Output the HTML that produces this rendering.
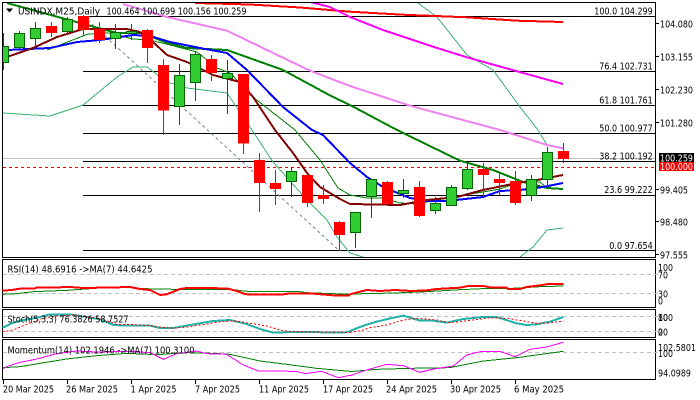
<!DOCTYPE html>
<html>
<head>
<meta charset="utf-8">
<style>
html,body{margin:0;padding:0;background:#fff;width:700px;height:400px;overflow:hidden}
svg{display:block}
text{font-family:"DejaVu Sans","Liberation Sans",sans-serif;font-size:10px;fill:#000}
.r line{stroke:#b22222;stroke-width:1}
.r rect{fill:#f00;stroke:none}
.g line{stroke:#006400;stroke-width:1}
.g rect{fill:#32cd32;stroke:#006400;stroke-width:1}
polyline{fill:none;stroke-linejoin:round;vector-effect:non-scaling-stroke;shape-rendering:crispEdges}
.h line{stroke:#000;stroke-width:1}
.t line{stroke:#000;stroke-width:1}
</style>
</head>
<body>
<svg width="700" height="400" viewBox="0 0 700 400" xmlns="http://www.w3.org/2000/svg">
<defs>
<clipPath id="m"><rect x="3" y="3" width="652" height="254"/></clipPath>
</defs>
<rect width="700" height="400" fill="#fff"/>

<g clip-path="url(#m)">
<line x1="3" y1="158.5" x2="655" y2="158.5" stroke="#c0c0c0"/>
<g class="h">
<line x1="83" y1="16.5" x2="655" y2="16.5"/>
<line x1="83" y1="71.5" x2="655" y2="71.5"/>
<line x1="83" y1="105.5" x2="655" y2="105.5"/>
<line x1="83" y1="133.5" x2="655" y2="133.5"/>
<line x1="83" y1="161.5" x2="655" y2="161.5"/>
<line x1="83" y1="195.5" x2="655" y2="195.5"/>
<line x1="83" y1="250.5" x2="655" y2="250.5"/>
</g>
<line x1="3" y1="167.5" x2="655" y2="167.5" stroke="#f00" stroke-dasharray="3 3"/>
<line x1="83" y1="16" x2="339" y2="250.5" stroke="#708090" stroke-dasharray="3 3"/>

<!-- Bollinger lower -->
<polyline stroke="#3cb371" stroke-width="1" points="3,113 50,116 83,105 117,77 133,67 147,67 167,82 187,88 227,93 252,130 273,162 307,200 327,220 337,237 350,253 363,257 372,262"/>
<polyline stroke="#3cb371" stroke-width="1" points="515,262 520,257 533,247 547,230 563,228"/>
<!-- Bollinger upper -->
<polyline stroke="#3cb371" stroke-width="1" points="412,-2 418,3 437,17 467,55 493,70 520,107 538,130 547,145 563,148"/>
<!-- red -->
<polyline stroke="#f00" stroke-width="2" points="195,3 250,4.5 300,7.5 350,11.7 403,14.7 467,17.3 517,20.7 563,22"/>
<!-- magenta -->
<polyline stroke="#f0f" stroke-width="2" points="310,2 330,7 350,17 383,30 433,46.7 467,57.3 517,71.3 563,84"/>
<!-- violet -->
<polyline stroke="#ee82ee" stroke-width="2" points="123,4 167,17 227,30.7 267,50 310,70.7 350,86 411,106 500,130 547,145 563,148.3"/>
<!-- thick green -->
<polyline stroke="#008000" stroke-width="2" points="7,3 80,23 117,33 143,33 167,43 187,48 227,50 283,70 333,97 350,105 397,130 460,160.7 493,170 523,182 547,188 563,189"/>
<!-- thin green -->
<polyline stroke="#008000" stroke-width="1" points="47,50 60,45 88,34 110,33 133,39 150,40 170,45 197,52 217,68 230,73 253,97 295,130 320,160 338,188 350,195 367,198 383,198 400,203 417,204 447,198 483,192 500,189 517,183 540,182 547,188 563,189"/>
<!-- blue -->
<polyline stroke="#00f" stroke-width="2" points="7,50 50,48 77,42 100,40 133,35 150,36 170,42 200,48 227,53 247,70 283,107 312,130 323,135 350,163 367,177 383,187 410,198 427,201 447,201 483,197 500,191 520,190 543,187 563,183"/>
<!-- dark red -->
<polyline stroke="#800000" stroke-width="2" points="7,57 33,48 57,37 83,29 127,29 140,32 153,42 167,55 187,62 213,75 240,82 253,97 275,130 293,153 307,173 320,187 340,199 350,204 400,205 427,200 457,197 483,190 517,183 537,180 563,175"/>

<!-- candles -->
<g class="g"><line x1="3.5" y1="33" x2="3.5" y2="70"/><rect x="-1.5" y="46.5" width="10" height="16"/></g>
<g class="g"><line x1="19.5" y1="31" x2="19.5" y2="49"/><rect x="14.5" y="33.5" width="10" height="14"/></g>
<g class="g"><line x1="35.5" y1="22" x2="35.5" y2="47"/><rect x="30.5" y="28.5" width="10" height="10"/></g>
<g class="r"><line x1="51.5" y1="22" x2="51.5" y2="37"/><rect x="46" y="26" width="11" height="7"/></g>
<g class="g"><line x1="67.5" y1="17" x2="67.5" y2="35"/><rect x="62.5" y="19.5" width="10" height="12"/></g>
<g class="r"><line x1="83.5" y1="15" x2="83.5" y2="36"/><rect x="78" y="16" width="11" height="14"/></g>
<g class="r"><line x1="99.5" y1="22" x2="99.5" y2="43"/><rect x="94" y="29" width="11" height="11"/></g>
<g class="g"><line x1="115.5" y1="24" x2="115.5" y2="49"/><rect x="110.5" y="32.5" width="10" height="6"/></g>
<g class="g"><line x1="131.5" y1="24" x2="131.5" y2="40"/><rect x="126.5" y="31.5" width="10" height="2"/></g>
<g class="r"><line x1="147.5" y1="29" x2="147.5" y2="63"/><rect x="142" y="30" width="11" height="18"/></g>
<g class="r"><line x1="163.5" y1="59" x2="163.5" y2="135"/><rect x="158" y="65" width="11" height="45.5"/></g>
<g class="g"><line x1="179.5" y1="64" x2="179.5" y2="125"/><rect x="174.5" y="75.5" width="10" height="31"/></g>
<g class="g"><line x1="195.5" y1="51" x2="195.5" y2="101"/><rect x="190.5" y="54.5" width="10" height="28"/></g>
<g class="r"><line x1="211.5" y1="55" x2="211.5" y2="81"/><rect x="206" y="59" width="11" height="14"/></g>
<g class="g"><line x1="227.5" y1="60" x2="227.5" y2="114"/><rect x="222.5" y="73.5" width="10" height="5"/></g>
<g class="r"><line x1="243.5" y1="74" x2="243.5" y2="154"/><rect x="238" y="74" width="11" height="69.5"/></g>
<g class="r"><line x1="259.5" y1="153" x2="259.5" y2="212"/><rect x="254" y="160" width="11" height="23"/></g>
<g class="r"><line x1="275.5" y1="170" x2="275.5" y2="205"/><rect x="270" y="183" width="11" height="6"/></g>
<g class="g"><line x1="291.5" y1="167" x2="291.5" y2="197"/><rect x="286.5" y="171.5" width="10" height="10"/></g>
<g class="r"><line x1="307.5" y1="174" x2="307.5" y2="207"/><rect x="302" y="175" width="11" height="28"/></g>
<g class="r"><line x1="323.5" y1="185" x2="323.5" y2="204"/><rect x="318" y="195" width="11" height="4"/></g>
<g class="r"><line x1="339.5" y1="221" x2="339.5" y2="251"/><rect x="334" y="222" width="11" height="13"/></g>
<g class="g"><line x1="355.5" y1="212" x2="355.5" y2="248"/><rect x="350.5" y="212.5" width="10" height="20"/></g>
<g class="g"><line x1="371.5" y1="179" x2="371.5" y2="218"/><rect x="366.5" y="179.5" width="10" height="17"/></g>
<g class="r"><line x1="387.5" y1="181" x2="387.5" y2="204"/><rect x="382" y="182" width="11" height="22"/></g>
<g class="g"><line x1="403.5" y1="179" x2="403.5" y2="198"/><rect x="398.5" y="190.5" width="10" height="3"/></g>
<g class="r"><line x1="419.5" y1="181" x2="419.5" y2="217"/><rect x="414" y="187" width="11" height="29"/></g>
<g class="g"><line x1="435.5" y1="197" x2="435.5" y2="214"/><rect x="430.5" y="203.5" width="10" height="7"/></g>
<g class="g"><line x1="451.5" y1="185" x2="451.5" y2="206"/><rect x="446.5" y="187.5" width="10" height="18"/></g>
<g class="g"><line x1="467.5" y1="162" x2="467.5" y2="190"/><rect x="462.5" y="169.5" width="10" height="19"/></g>
<g class="r"><line x1="483.5" y1="163" x2="483.5" y2="197"/><rect x="478" y="169" width="11" height="6"/></g>
<g class="r"><line x1="499.5" y1="172" x2="499.5" y2="195"/><rect x="494" y="179" width="11" height="4"/></g>
<g class="r"><line x1="515.5" y1="171" x2="515.5" y2="205"/><rect x="510" y="181" width="11" height="22"/></g>
<g class="g"><line x1="531.5" y1="175" x2="531.5" y2="201"/><rect x="526.5" y="179.5" width="10" height="16"/></g>
<g class="g"><line x1="547.5" y1="147" x2="547.5" y2="189"/><rect x="542.5" y="152.5" width="10" height="27"/></g>
<g class="r"><line x1="563.5" y1="143" x2="563.5" y2="163"/><rect x="558" y="151" width="11" height="8"/></g>
</g>

<!-- frames -->
<g fill="none" stroke="#000" stroke-width="1">
<rect x="2.5" y="2.5" width="653" height="255"/>
<rect x="2.5" y="259.5" width="653" height="48"/>
<rect x="2.5" y="309.5" width="653" height="28"/>
<rect x="2.5" y="339.5" width="653" height="40"/>
</g>

<!-- axis ticks -->
<g class="t">
<line x1="655" y1="23.5" x2="659" y2="23.5"/>
<line x1="655" y1="56.5" x2="659" y2="56.5"/>
<line x1="655" y1="89.5" x2="659" y2="89.5"/>
<line x1="655" y1="122.5" x2="659" y2="122.5"/>
<line x1="655" y1="189.5" x2="659" y2="189.5"/>
<line x1="655" y1="221.5" x2="659" y2="221.5"/>
<line x1="655" y1="254.5" x2="659" y2="254.5"/>
<line x1="3.5" y1="380" x2="3.5" y2="384"/>
<line x1="67.5" y1="380" x2="67.5" y2="384"/>
<line x1="131.5" y1="380" x2="131.5" y2="384"/>
<line x1="195.5" y1="380" x2="195.5" y2="384"/>
<line x1="259.5" y1="380" x2="259.5" y2="384"/>
<line x1="323.5" y1="380" x2="323.5" y2="384"/>
<line x1="387.5" y1="380" x2="387.5" y2="384"/>
<line x1="451.5" y1="380" x2="451.5" y2="384"/>
<line x1="515.5" y1="380" x2="515.5" y2="384"/>
</g>

<!-- dashed level lines -->
<g stroke="#c0c0c0" stroke-dasharray="4 3">
<line x1="3" y1="274.5" x2="660" y2="274.5"/>
<line x1="3" y1="293.5" x2="660" y2="293.5"/>
<line x1="3" y1="316.5" x2="660" y2="316.5"/>
<line x1="3" y1="331.5" x2="660" y2="331.5"/>
<line x1="3" y1="352.5" x2="660" y2="352.5"/>
</g>
<g transform="translate(0,255) scale(.33333)">
<polyline stroke="#008000" stroke-width="1" points="8,118 50,116 100,110 200,106 300,99 370,96 400,99 460,102 530,103 690,103 750,110 900,110 920,113 1050,118"/>
<polyline stroke="#f00" stroke-width="2" points="8,107 35,105 60,101 105,100 110,98 175,97 210,96 250,99 350,97 390,96 420,102 450,105 480,120 500,118 540,102 560,99 680,100 710,108 735,117 750,119 850,118 870,115 940,116 1000,121 1050,121"/>
<polyline stroke="#20b2aa" stroke-width="2" points="8,218 35,205 60,197 100,190 120,186 150,178 210,178 260,186 300,193 340,210 380,212 450,212 480,219 520,219 570,210 640,198 690,195 740,207 780,222 820,233 880,231 950,231 980,233 1030,233 1050,229"/>
<polyline stroke="#f00" stroke-width="1" stroke-dasharray="2 2" points="8,230 40,225 70,212 100,200 130,190 170,183 220,180 280,188 320,197 350,208 400,209 450,212 490,217 520,220 560,216 610,209 650,202 700,197 750,205 800,213 850,228 900,230 1050,232"/>
<polyline stroke="#008000" stroke-width="1" points="8,338 60,335 120,325 200,312 280,303 380,295 470,299 560,293 640,295 690,298 780,318 860,328 950,340 1050,349"/>
<polyline stroke="#f0f" stroke-width="1" points="8,342 20,335 60,322 110,312 170,296 230,288 290,291 340,290 400,290 450,293 490,313 530,296 590,288 620,296 680,298 730,330 775,348 890,349 915,356 965,349 1015,368 1050,361"/>
</g>
<g transform="translate(350,255) scale(.33333)">
<polyline stroke="#008000" stroke-width="1" points="0,118 40,116 135,114 230,110 330,104 420,100 470,101 520,98 570,95 640,93"/>
<polyline stroke="#f00" stroke-width="2" points="0,118 30,110 50,105 90,108 135,105 185,108 230,106 260,102 330,98 355,93 400,93 420,97 470,98 475,102 510,102 530,96 570,91 595,87 640,87"/>
<polyline stroke="#20b2aa" stroke-width="2" points="0,228 40,212 80,200 130,188 160,182 210,197 250,197 290,203 340,192 400,186 440,186 500,205 530,210 560,208 600,200 640,186"/>
<polyline stroke="#f00" stroke-width="1" stroke-dasharray="2 2" points="0,232 30,228 60,218 110,210 160,195 200,190 260,195 300,203 360,196 420,188 470,190 520,198 560,205 600,204 640,198"/>
<polyline stroke="#008000" stroke-width="1" points="0,350 80,343 180,340 300,338 400,318 500,308 640,289"/>
<polyline stroke="#f0f" stroke-width="1" points="0,362 50,345 110,328 160,332 210,352 250,342 310,333 350,300 395,289 450,289 495,305 540,283 590,276 640,262"/>
</g>

<!-- header -->
<polygon points="6,8.5 13,8.5 9.5,12.5" fill="#000"/>
<text x="18" y="14.5" textLength="82" lengthAdjust="spacingAndGlyphs">USINDX,M25,Daily</text>
<text x="106.5" y="14.5" textLength="140" lengthAdjust="spacingAndGlyphs">100.464 100.699 100.156 100.259</text>

<!-- fib labels -->
<text x="594.3" y="14.5" textLength="58.4" lengthAdjust="spacingAndGlyphs">100.0 104.299</text>
<text x="599.3" y="69.5" textLength="53.4" lengthAdjust="spacingAndGlyphs">76.4 102.731</text>
<text x="599.3" y="103.5" textLength="53.4" lengthAdjust="spacingAndGlyphs">61.8 101.761</text>
<text x="599.3" y="131.5" textLength="53.4" lengthAdjust="spacingAndGlyphs">50.0 100.977</text>
<text x="599.3" y="159.5" textLength="53.4" lengthAdjust="spacingAndGlyphs">38.2 100.192</text>
<text x="604.3" y="193" textLength="48.4" lengthAdjust="spacingAndGlyphs">23.6 99.222</text>
<text x="609.3" y="249" textLength="43.4" lengthAdjust="spacingAndGlyphs">0.0 97.654</text>

<!-- price axis -->
<text x="660" y="27.5" textLength="33" lengthAdjust="spacingAndGlyphs">104.080</text>
<text x="660" y="60.5" textLength="33" lengthAdjust="spacingAndGlyphs">103.155</text>
<text x="660" y="93.5" textLength="33" lengthAdjust="spacingAndGlyphs">102.230</text>
<text x="660" y="126.5" textLength="33" lengthAdjust="spacingAndGlyphs">101.280</text>
<text x="660" y="193.5" textLength="28" lengthAdjust="spacingAndGlyphs">99.405</text>
<text x="660" y="225.5" textLength="28" lengthAdjust="spacingAndGlyphs">98.480</text>
<text x="660" y="258.5" textLength="28" lengthAdjust="spacingAndGlyphs">97.555</text>
<rect x="659" y="153" width="35" height="9" fill="#000"/>
<text x="660" y="161.5" textLength="33" lengthAdjust="spacingAndGlyphs" style="fill:#fff">100.259</text>
<rect x="659" y="162" width="35" height="9" fill="#f00"/>
<text x="660" y="170" textLength="33" lengthAdjust="spacingAndGlyphs" style="fill:#fff">100.000</text>

<!-- subwindow labels -->
<text x="7.5" y="272.5" textLength="145" lengthAdjust="spacingAndGlyphs">RSI(14) 48.6916  -&gt;MA(7) 44.6425</text>
<text x="7.5" y="322.5" textLength="121" lengthAdjust="spacingAndGlyphs">Stoch(5,3,3) 76.3826 58.7527</text>
<text x="7.5" y="353.5" textLength="187" lengthAdjust="spacingAndGlyphs">Momentum(14) 102.1946  -&gt;MA(7) 100.3100</text>

<!-- subwindow axes -->
<text x="658" y="271" textLength="15" lengthAdjust="spacingAndGlyphs">100</text>
<text x="658" y="278.500" textLength="10" lengthAdjust="spacingAndGlyphs">70</text>
<text x="658" y="297.500" textLength="10" lengthAdjust="spacingAndGlyphs">30</text>
<text x="658" y="304.500" textLength="5" lengthAdjust="spacingAndGlyphs">0</text>
<text x="658" y="321" textLength="15" lengthAdjust="spacingAndGlyphs">100</text>
<text x="658" y="321" textLength="10" lengthAdjust="spacingAndGlyphs">80</text>
<text x="658" y="335.500" textLength="10" lengthAdjust="spacingAndGlyphs">20</text>
<text x="658" y="335.500" textLength="5" lengthAdjust="spacingAndGlyphs">0</text>
<text x="658" y="351" textLength="38" lengthAdjust="spacingAndGlyphs">102.5801</text>
<text x="658" y="357" textLength="15" lengthAdjust="spacingAndGlyphs">100</text>
<text x="658" y="376.500" textLength="33" lengthAdjust="spacingAndGlyphs">94.0989</text>

<!-- date axis -->
<text x="3" y="392.500" textLength="51" lengthAdjust="spacingAndGlyphs">20 Mar 2025</text>
<text x="66" y="392.500" textLength="52" lengthAdjust="spacingAndGlyphs">26 Mar 2025</text>
<text x="130.500" y="392.500" textLength="46" lengthAdjust="spacingAndGlyphs">1 Apr 2025</text>
<text x="195" y="392.500" textLength="45" lengthAdjust="spacingAndGlyphs">7 Apr 2025</text>
<text x="259" y="392.500" textLength="50" lengthAdjust="spacingAndGlyphs">11 Apr 2025</text>
<text x="323" y="392.500" textLength="50" lengthAdjust="spacingAndGlyphs">17 Apr 2025</text>
<text x="386" y="392.500" textLength="51" lengthAdjust="spacingAndGlyphs">24 Apr 2025</text>
<text x="450" y="392.500" textLength="51" lengthAdjust="spacingAndGlyphs">30 Apr 2025</text>
<text x="514" y="392.500" textLength="50" lengthAdjust="spacingAndGlyphs">6 May 2025</text>
</svg>
</body>
</html>
